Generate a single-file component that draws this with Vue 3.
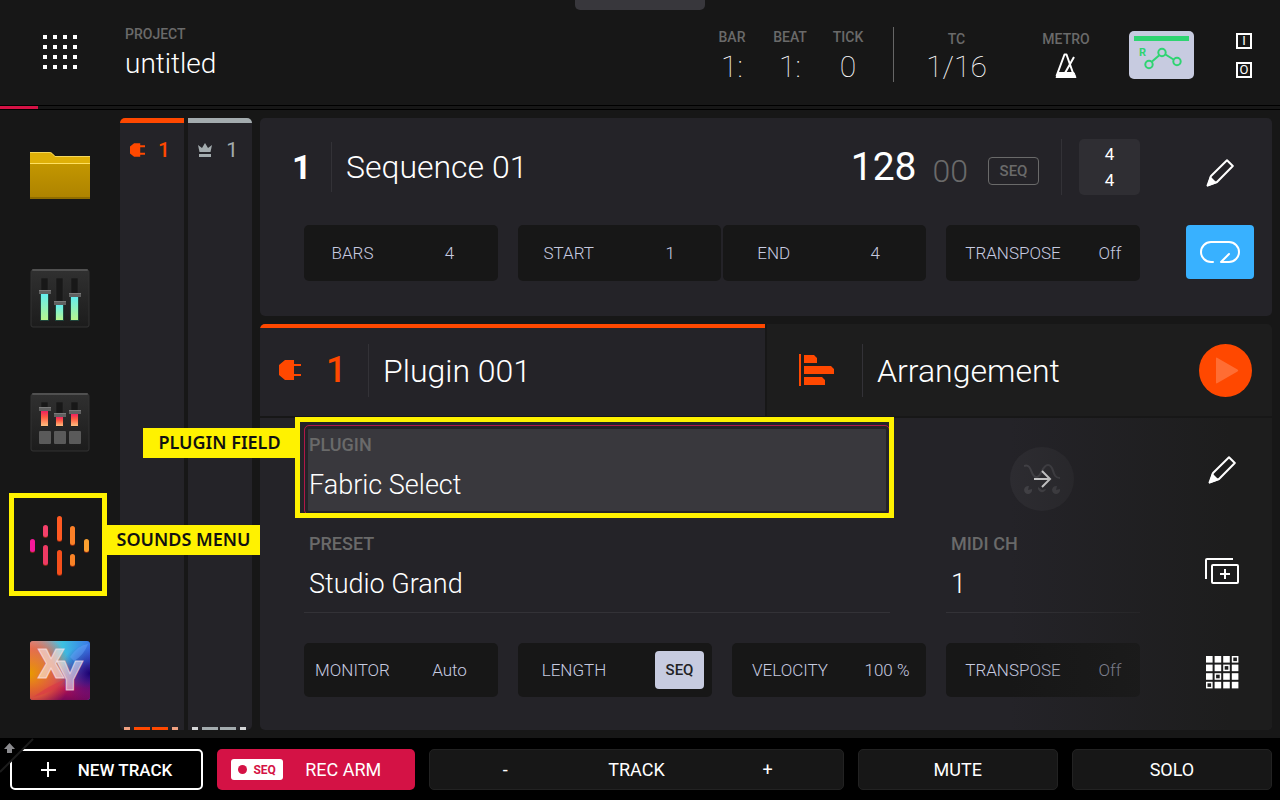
<script setup>
import { ref } from 'vue';

const activeTab = ref('plugin');
const looping = ref(true);

const counters = [
    { label: 'BAR', value: '1:' },
    { label: 'BEAT', value: '1:' },
    { label: 'TICK', value: '0' },
];

const tracks = [
    { kind: 'plugin', number: 1 },
    { kind: 'master', number: 1 },
];

// fader tops and levels inside the 60x60 mixer icons
const channelFaders = [
    { x: 11, top: 21 },
    { x: 26, top: 32 },
    { x: 41, top: 24 },
];
const padFaders = [
    { x: 11, top: 14 },
    { x: 26, top: 20 },
    { x: 41, top: 17 },
];

// one bar of the sounds icon: x, y, height, colour
const soundBars = [
    [0, 23, 13, '#f5189a'],
    [13, 9, 12, '#f5406a'],
    [13, 29, 20, '#ee3a63'],
    [27, 0, 25, '#ff5a22'],
    [27, 34, 25, '#f5501c'],
    [40, 10, 19, '#fb8028'],
    [40, 38, 12, '#f98226'],
    [54, 23, 13, '#fb9f30'],
];

const padCells = [];
for (let row = 0; row < 4; row++) {
    for (let col = 0; col < 4; col++) {
        padCells.push({ x: col * 8.6, y: row * 8.6, hollow: row + col === 3 });
    }
}
</script>

<template>
    <div class="screen">
        <header class="top">
            <span class="notch"></span>
            <button class="menu-dots" aria-label="Menu">
                <svg width="34" height="34" viewBox="0 0 34 34" fill="#fff">
                    <template v-for="r in 4" :key="r">
                        <rect v-for="c in 4" :key="c" :x="(c - 1) * 10" :y="(r - 1) * 10" width="4" height="4" />
                    </template>
                </svg>
            </button>
            <div class="project">
                <span class="caption">PROJECT</span>
                <span class="project-name">untitled</span>
            </div>
            <div class="counters">
                <div v-for="c in counters" :key="c.label" class="counter">
                    <span class="caption">{{ c.label }}</span>
                    <span class="thin-value">{{ c.value }}</span>
                </div>
            </div>
            <div class="counter tc">
                <span class="caption">TC</span>
                <span class="thin-value">1/16</span>
            </div>
            <button class="counter metro">
                <span class="caption">METRO</span>
                <svg width="24" height="26" viewBox="0 0 24 26" fill="none" stroke="#fff" stroke-width="2" stroke-linejoin="round">
                    <path d="M2.500 23 L10.500 1.500 H12.500 L19 20 M11 20 L20 4" />
                    <path d="M2 24.500 L4 19.500 H20 L22 24.500 Z" fill="#fff" stroke-width="1" />
                </svg>
            </button>
            <button class="automation" aria-label="Automation read">
                <svg width="65" height="48" viewBox="0 0 65 48">
                    <rect x="5" y="5" width="55" height="5" fill="#2fd472" />
                    <text x="10" y="25" class="auto-letter">R</text>
                    <g fill="none" stroke="#2fd472" stroke-width="2">
                        <path d="M23 30.500 L30 24.500 M36.500 23.500 L44.500 28.500" />
                        <circle cx="20" cy="33.500" r="3.700" />
                        <circle cx="33" cy="21.500" r="3.700" />
                        <circle cx="48" cy="30.500" r="3.700" />
                    </g>
                </svg>
            </button>
            <div class="io">
                <span>I</span>
                <span>O</span>
            </div>
        </header>
        <div class="progress"><span></span></div>

        <div class="main">
            <nav class="rail">
                <button class="rail-item" aria-label="Browser">
                    <svg width="60" height="60" viewBox="0 0 60 60">
                        <defs>
                            <linearGradient id="folder" x1="0" y1="0" x2="0" y2="1">
                                <stop offset="0" stop-color="#c39700" />
                                <stop offset="1" stop-color="#ad8200" />
                            </linearGradient>
                        </defs>
                        <path d="M0 7 H19 Q21 7 22 8 L25 11 H60 V20 H0 Z" fill="#dfb008" />
                        <path d="M0 7.500 H19 Q21 7.500 22 8.500 L25 11.500 H60" fill="none" stroke="#f4d75c" />
                        <rect y="18" width="60" height="36" fill="url(#folder)" />
                        <rect y="18" width="60" height="1" fill="#ffe060" />
                        <rect y="52" width="60" height="2" fill="#8f6c00" />
                    </svg>
                </button>
                <button class="rail-item" aria-label="Channel mixer">
                    <svg width="60" height="60" viewBox="0 0 60 60">
                        <defs>
                            <linearGradient id="tile" x1="0" y1="0" x2="0" y2="1">
                                <stop offset="0" stop-color="#303030" />
                                <stop offset="1" stop-color="#1c1c1c" />
                            </linearGradient>
                            <linearGradient id="mint" x1="0" y1="0" x2="0" y2="1">
                                <stop offset="0" stop-color="#64eef0" />
                                <stop offset="1" stop-color="#b8f58c" />
                            </linearGradient>
                        </defs>
                        <rect x="1" y="1" width="58" height="57" rx="2" fill="url(#tile)" stroke="#333" />
                        <rect x="2" y="0" width="56" height="2" rx="1" fill="#505050" />
                        <g v-for="f in channelFaders" :key="f.x">
                            <rect :x="f.x" y="9" width="7" height="42" fill="#181818" stroke="#333" stroke-width="0.500" />
                            <rect :x="f.x - 1" :y="f.top + 4" width="9" :height="48 - f.top" fill="#1c5c4c" opacity="0.600" />
                            <rect :x="f.x" :y="f.top + 4" width="7" :height="47 - f.top" fill="url(#mint)" />
                            <rect :x="f.x - 2" :y="f.top" width="12" height="4" fill="#606060" />
                            <rect :x="f.x - 2" :y="f.top" width="12" height="1" fill="#7a7a7a" />
                        </g>
                    </svg>
                </button>
                <button class="rail-item" aria-label="Pad mixer">
                    <svg width="60" height="60" viewBox="0 -1 60 60">
                        <defs>
                            <linearGradient id="ember" x1="0" y1="0" x2="0" y2="1">
                                <stop offset="0" stop-color="#f02060" />
                                <stop offset="0.400" stop-color="#ff5a40" />
                                <stop offset="1" stop-color="#ffc080" />
                            </linearGradient>
                        </defs>
                        <rect x="1" y="1" width="58" height="57" rx="2" fill="url(#tile)" stroke="#333" />
                        <rect x="2" y="0" width="56" height="2" rx="1" fill="#505050" />
                        <g v-for="f in padFaders" :key="f.x">
                            <rect :x="f.x" y="9" width="7" height="25" fill="#181818" stroke="#333" stroke-width="0.500" />
                            <rect :x="f.x" :y="f.top + 4" width="7" :height="29 - f.top" fill="url(#ember)" />
                            <rect :x="f.x - 2" :y="f.top" width="12" height="4" fill="#606060" />
                            <rect :x="f.x - 2" :y="f.top" width="12" height="1" fill="#7a7a7a" />
                            <rect :x="f.x - 2" y="38" width="12" height="13" rx="1" fill="#5a5a5a" />
                        </g>
                    </svg>
                </button>
                <button class="rail-item" aria-label="Sounds">
                    <svg width="60" height="60" viewBox="0 0 60 60">
                        <g v-for="(b, i) in soundBars" :key="i">
                            <rect :x="b[0]" :y="b[1] + 1" width="5" :height="b[2]" rx="2.500" fill="#8a2810" />
                            <rect :x="b[0]" :y="b[1]" width="5" :height="b[2]" rx="2.500" :fill="b[3]" />
                        </g>
                    </svg>
                    <span class="mark mark-sounds"></span>
                    <span class="tag tag-sounds">SOUNDS MENU</span>
                </button>
                <button class="rail-item" aria-label="XYFX">
                    <svg width="60" height="60" viewBox="0 -1 60 60">
                        <defs>
                            <linearGradient id="xyTop" x1="0" y1="0" x2="1" y2="0">
                                <stop offset="0" stop-color="#dda0a4" />
                                <stop offset="0.550" stop-color="#3cc0e0" />
                                <stop offset="1" stop-color="#3a78e8" />
                            </linearGradient>
                            <radialGradient id="xyLeft" cx="0" cy="0.550" r="0.700">
                                <stop offset="0" stop-color="#e89a00" />
                                <stop offset="0.600" stop-color="#ea6038" stop-opacity="0.800" />
                                <stop offset="1" stop-color="#e85030" stop-opacity="0" />
                            </radialGradient>
                            <radialGradient id="xyRight" cx="1" cy="0.550" r="0.500">
                                <stop offset="0" stop-color="#180070" />
                                <stop offset="1" stop-color="#3010a0" stop-opacity="0" />
                            </radialGradient>
                            <linearGradient id="xyBottom" x1="0" y1="0" x2="0" y2="1">
                                <stop offset="0.350" stop-color="#d02860" stop-opacity="0" />
                                <stop offset="0.800" stop-color="#b01058" />
                                <stop offset="1" stop-color="#780858" />
                            </linearGradient>
                        </defs>
                        <rect width="60" height="59" rx="3" fill="url(#xyTop)" />
                        <rect width="60" height="59" rx="3" fill="url(#xyBottom)" />
                        <rect width="60" height="59" rx="3" fill="url(#xyLeft)" />
                        <rect width="60" height="59" rx="3" fill="url(#xyRight)" />
                        <path d="M3 56 Q24 52 36 38 Q20 44 3 56 Z" fill="#d83848" opacity="0.600" />
                        <path d="M40 16 Q48 4 58 3 Q54 14 44 20 Z" fill="#6fa8ff" opacity="0.400" />
                        <text x="8" y="37" class="xy-letter">X</text>
                        <text x="27" y="49" class="xy-letter">Y</text>
                    </svg>
                </button>
            </nav>

            <div class="tracks">
                <button v-for="t in tracks" :key="t.kind" class="track" :class="t.kind">
                    <span class="track-head">
                        <svg v-if="t.kind === 'plugin'" width="15" height="14" viewBox="0 0 22 20" fill="currentColor">
                            <path d="M0 5 L6 0 H15 V3 H22 V6 H15 V14 H22 V17 H15 V20 H6 L0 15 Z" />
                        </svg>
                        <svg v-else width="14" height="14" viewBox="0 0 14 14" fill="currentColor">
                            <path d="M0 2 L4 5 L7 0 L10 5 L14 2 L12.500 9 H1.500 Z M1 11 H13 V14 H1 Z" />
                        </svg>
                        <span>{{ t.number }}</span>
                    </span>
                    <span class="meters"><i class="edge"></i><i></i><i></i><i class="edge"></i></span>
                </button>
            </div>

            <div class="panels">
                <section class="panel sequence">
                    <div class="panel-main">
                        <div class="seq-head">
                            <span class="seq-number">1</span>
                            <h1 class="seq-name">Sequence 01</h1>
                            <div class="tempo">
                                <span class="bpm">128</span>
                                <span class="bpm-fraction">00</span>
                                <button class="seq-mode">SEQ</button>
                            </div>
                            <button class="time-signature"><span>4</span><span>4</span></button>
                        </div>
                        <div class="cells">
                            <button class="cell"><span>BARS</span><span>4</span></button>
                            <div class="range">
                                <button class="cell"><span>START</span><span>1</span></button>
                                <button class="cell"><span>END</span><span>4</span></button>
                            </div>
                            <button class="cell wide"><span>TRANSPOSE</span><span>Off</span></button>
                        </div>
                    </div>
                    <div class="side">
                        <button class="icon-button" aria-label="Edit sequence">
                            <svg width="28" height="28" viewBox="0 0 28 28">
                                <path d="M21 1.200 L26.800 7 L11 23 L1.500 26.500 L5 17 Z" fill="none" stroke="#fff" stroke-width="2" stroke-linejoin="round" />
                                <path d="M4 17 L11 24 L1 27.500 Z" fill="#fff" />
                            </svg>
                        </button>
                        <button class="loop" :class="{ off: !looping }" aria-label="Loop" @click="looping = !looping">
                            <svg width="40" height="22" viewBox="0 0 40 22" fill="none" stroke="#fff" stroke-width="2" stroke-linecap="round" stroke-linejoin="round">
                                <path d="M13 21 H11 A10 10 0 0 1 11 1 H29 A10 10 0 0 1 29 21 H21 L29 13" />
                            </svg>
                        </button>
                    </div>
                </section>

                <section class="panel track-panel">
                    <div class="tabs">
                        <button class="tab" :class="{ active: activeTab === 'plugin' }" @click="activeTab = 'plugin'">
                            <svg class="plug" width="22" height="20" viewBox="0 0 22 20" fill="#ff4800">
                                <path d="M0 5 L6 0 H15 V4 H22 V6 H15 V14 H22 V16 H15 V20 H6 L0 15 Z" />
                            </svg>
                            <span class="tab-number">1</span>
                            <span class="tab-name">Plugin 001</span>
                        </button>
                        <div class="tab" :class="{ active: activeTab === 'arrangement' }">
                            <button class="tab-link" @click="activeTab = 'arrangement'">
                                <svg width="35" height="32" viewBox="0 0 35 32" fill="#ff4800">
                                    <path d="M0 0 H2 V32 H0 Z M5 1 H15 L18 4 V9 H5 Z M5 12 H32 L35 15 V20 H5 Z M5 23 H23 L26 26 V31 H5 Z" />
                                </svg>
                                <span class="tab-name">Arrangement</span>
                            </button>
                            <button class="play" aria-label="Play">
                                <svg width="53" height="53" viewBox="0 0 53 53">
                                    <circle cx="26.500" cy="26.500" r="26.500" fill="#ff4800" />
                                    <path d="M17 14.500 Q17 13 18.500 14 L38.500 25.500 Q40 26.500 38.500 27.500 L18.500 39 Q17 40 17 38.500 Z" fill="#ff6d33" />
                                </svg>
                            </button>
                        </div>
                    </div>

                    <div class="body">
                        <div class="panel-main">
                            <div class="fields">
                                <div class="slot">
                                    <button class="field focused">
                                        <span class="field-label">PLUGIN</span>
                                        <span class="field-value">Fabric Select</span>
                                    </button>
                                    <span class="mark mark-plugin"></span>
                                    <span class="tag tag-plugin">PLUGIN FIELD</span>
                                </div>
                                <button class="plugin-open" aria-label="Open plugin">
                                    <svg width="36" height="30" viewBox="0 0 36 30" fill="none">
                                        <path d="M0 2 C9 -1 6 14 13 13 C18 12 18 1 24 1 C31 1 27 14 36 14" stroke="#444348" stroke-width="2" />
                                        <g fill="#444348">
                                            <path d="M4 26 L5 22 A4 4 0 1 0 8 25 Z" />
                                            <path d="M18 26 L14 23 A4 4 0 1 0 22 25 Z" />
                                            <path d="M32 26 L33 22 A4 4 0 1 0 36 25 Z" />
                                        </g>
                                        <path d="M10 15 H26 M18 7 L26 15 L18 23" stroke="#dededf" stroke-width="2" />
                                    </svg>
                                </button>
                                <button class="field underlined preset">
                                    <span class="field-label">PRESET</span>
                                    <span class="field-value">Studio Grand</span>
                                </button>
                                <button class="field underlined">
                                    <span class="field-label">MIDI CH</span>
                                    <span class="field-value">1</span>
                                </button>
                            </div>
                            <div class="cells four">
                                <button class="cell"><span>MONITOR</span><span>Auto</span></button>
                                <button class="cell length"><span>LENGTH</span><span class="chip">SEQ</span></button>
                                <button class="cell velocity"><span>VELOCITY</span><span>100 %</span></button>
                                <button class="cell wide"><span>TRANSPOSE</span><span>Off</span></button>
                            </div>
                        </div>
                        <div class="side">
                            <button class="icon-button" aria-label="Edit track">
                                <svg width="28" height="28" viewBox="0 0 28 28">
                                    <path d="M21 1.200 L26.800 7 L11 23 L1.500 26.500 L5 17 Z" fill="none" stroke="#fff" stroke-width="2" stroke-linejoin="round" />
                                    <path d="M4 17 L11 24 L1 27.500 Z" fill="#fff" />
                                </svg>
                            </button>
                            <button class="icon-button" aria-label="Duplicate track">
                                <svg width="34" height="26" viewBox="0 0 34 26" fill="none" stroke="#fff" stroke-width="2">
                                    <path d="M1 21 V2 Q1 1 2 1 H28 M20 11 V21 M15 16 H25" />
                                    <rect x="7" y="7" width="26" height="18" rx="1" />
                                </svg>
                            </button>
                            <button class="icon-button" aria-label="Pads">
                                <svg width="33" height="33" viewBox="0 0 33 33" fill="#fff">
                                    <g v-for="(p, i) in padCells" :key="i">
                                        <rect :x="p.x" :y="p.y" width="6.600" height="6.600" />
                                        <rect v-if="p.hollow" :x="p.x + 1.500" :y="p.y + 1.500" width="3.600" height="3.600" fill="#1d1d1d" />
                                    </g>
                                </svg>
                            </button>
                        </div>
                    </div>
                </section>
            </div>
        </div>

        <footer class="bottom">
            <button class="key new-track"><span class="plus"></span>NEW TRACK</button>
            <button class="key rec-arm"><span class="rec-chip"><i></i>SEQ</span>REC ARM</button>
            <div class="key stepper">
                <button aria-label="Previous track">-</button>
                <span>TRACK</span>
                <button aria-label="Next track">+</button>
            </div>
            <button class="key">MUTE</button>
            <button class="key">SOLO</button>
            <svg class="corner" width="36" height="36" viewBox="0 0 36 36">
                <path d="M0 0 H34 L0 34 Z" fill="#000" />
                <path d="M33 1 L0 34" stroke="#1c1c1c" stroke-width="2" />
                <path d="M9.500 5 L15 11 H12 V15 H7 V11 H4 Z" fill="#8a8a8e" />
            </svg>
        </footer>
    </div>
</template>

<style>
body {
    margin: 0;
    background: #171717;
}
</style>

<style scoped>
.screen {
    display: flex;
    flex-direction: column;
    min-height: 100vh;
    background: #171717;
    color: #fff;
    font-family: Roboto, "Liberation Sans", sans-serif;
    font-weight: 300;
}

.screen * {
    box-sizing: border-box;
}

button {
    display: flex;
    align-items: center;
    justify-content: center;
    margin: 0;
    padding: 0;
    border: 0;
    background: none;
    color: inherit;
    font: inherit;
    cursor: pointer;
}

svg {
    display: block;
    flex: none;
}

/* ===== header ===== */
.top {
    position: relative;
    display: flex;
    align-items: flex-start;
    height: 105px;
    padding: 0 28px 0 43px;
}

.notch {
    position: absolute;
    top: 0;
    left: 50%;
    width: 130px;
    height: 10px;
    margin-left: -65px;
    border-radius: 0 0 5px 5px;
    background: #38373c;
}

.menu-dots {
    margin-top: 35px;
}

.caption {
    color: #6a6a6a;
    font-size: 14px;
    font-weight: 500;
    line-height: 16px;
}

.project {
    display: flex;
    flex-direction: column;
    gap: 6px;
    flex: 1;
    margin-left: 48px;
    padding-top: 26px;
}

.project-name {
    font-size: 28px;
    line-height: 32px;
}

.counters {
    display: flex;
    margin-right: 16px;
}

.counter {
    display: flex;
    flex-direction: column;
    align-items: center;
    justify-content: flex-start;
    gap: 6px;
    width: 58px;
    padding-top: 29px;
}

.thin-value {
    font-size: 30px;
    font-weight: 100;
    line-height: 32px;
}

.tc {
    position: relative;
    gap: 4px;
    width: 127px;
    padding-top: 31px;
}

.tc::before {
    content: "";
    position: absolute;
    top: 27px;
    left: 0;
    width: 1px;
    height: 55px;
    background: #666;
}

.metro {
    width: 92px;
    padding-top: 31px;
}

.automation {
    margin: 31px 42px 0 17px;
    border-radius: 5px;
    background: #c7cbe0;
}

.auto-letter {
    fill: #2fd472;
    font-size: 11px;
    font-weight: 700;
}

.io {
    display: flex;
    flex-direction: column;
    gap: 13px;
    padding-top: 33px;
}

.io span {
    width: 16px;
    height: 16px;
    border: 2px solid #fff;
    font-size: 13px;
    font-weight: 400;
    line-height: 12px;
    text-align: center;
}

.progress {
    height: 5px;
    border-top: 1px solid #000;
    border-bottom: 1px solid #000;
}

.progress span {
    display: block;
    width: 3%;
    height: 3px;
    background: #d41245;
}

/* ===== rail and tracks ===== */
.main {
    display: flex;
    flex: 1;
    padding-right: 8px;
}

.rail {
    display: flex;
    flex-direction: column;
    justify-content: space-around;
    align-items: center;
    width: 120px;
    padding: 3px 0 6px;
}

.rail-item {
    position: relative;
    width: 60px;
    height: 60px;
}

.xy-letter {
    fill: #fff;
    fill-opacity: 0.55;
    stroke: #ffe8ee;
    stroke-opacity: 0.7;
    font-size: 41px;
    font-weight: 900;
}

.tracks {
    display: flex;
    gap: 4px;
    padding: 8px 8px 8px 0;
}

.track {
    flex-direction: column;
    justify-content: space-between;
    width: 64px;
    border-top: 5px solid currentColor;
    background: #242328;
    color: #a3abae;
}

.track.plugin {
    border-radius: 5px 0 0 5px;
    color: #ff4800;
}

.track.master {
    border-radius: 0 5px 5px 0;
}

.track-head {
    display: flex;
    align-items: center;
    align-self: flex-start;
    justify-content: space-between;
    width: 40px;
    margin: 15px 0 0 10px;
    font-size: 21px;
    font-weight: 500;
    line-height: 24px;
}

.track.master .track-head {
    font-weight: 400;
}

.meters {
    display: flex;
    align-self: flex-start;
    gap: 2px;
    margin-left: 4px;
}

.meters i {
    width: 16px;
    height: 3px;
    background: currentColor;
}

.meters .edge {
    width: 6px;
    margin-right: 2px;
    background: #f0a080;
}

.meters .edge:last-child {
    margin: 0 0 0 2px;
}

.master .edge {
    background: #d4d6d8;
}

/* ===== panels ===== */
.panels {
    display: flex;
    flex: 1;
    flex-direction: column;
    gap: 8px;
    padding: 8px 0;
}

.panel {
    border-radius: 5px;
    background: #242328;
}

.sequence {
    display: flex;
    padding: 21px 0 35px;
}

.panel-main {
    flex: 1;
    padding: 0 28px 0 44px;
}

.side {
    display: flex;
    flex-direction: column;
    align-items: center;
    width: 104px;
}

.seq-head {
    display: flex;
    align-items: center;
    height: 56px;
    margin: 0 0 30px -44px;
}

.seq-number {
    width: 72px;
    padding-left: 32px;
    border-right: 1px solid #333237;
    font-size: 34px;
    font-weight: 700;
    line-height: 50px;
}

.seq-name {
    flex: 1;
    margin: 0;
    padding-left: 14px;
    font-size: 32px;
    font-weight: 300;
    line-height: 40px;
}

.tempo {
    display: flex;
    align-items: center;
    margin-right: 17px;
    padding-right: 22px;
    border-right: 1px solid #333237;
}

.bpm {
    font-size: 39px;
    font-weight: 400;
    line-height: 56px;
}

.bpm-fraction {
    margin: 8px 20px 0 16px;
    color: #6a6a6a;
    font-size: 32px;
    line-height: 40px;
}

.seq-mode {
    width: 51px;
    height: 28px;
    margin-top: 8px;
    border: 1px solid #6a6a6a;
    border-radius: 4px;
    color: #6a6a6a;
    font-size: 15px;
    font-weight: 500;
    line-height: 16px;
}

.time-signature {
    flex-direction: column;
    gap: 8px;
    width: 61px;
    height: 56px;
    border-radius: 5px;
    background: #2f2e33;
    font-size: 17px;
    font-weight: 400;
    line-height: 18px;
}

.cells {
    display: grid;
    grid-template-columns: 194fr 408fr 194fr;
    gap: 20px;
}

.cells.four {
    grid-template-columns: repeat(4, 1fr);
}

.range {
    display: grid;
    grid-template-columns: 1fr 1fr;
    gap: 2px;
}

.cell {
    display: grid;
    grid-template-columns: 1fr 1fr;
    justify-items: center;
    height: 56px;
    border-radius: 5px;
    background: #171717;
    color: #c7cbe0;
    font-size: 17px;
    line-height: 22px;
    white-space: nowrap;
}

.four .cell {
    height: 54px;
}

.cell.wide {
    grid-template-columns: 134fr 60fr;
}

.cell.velocity {
    grid-template-columns: 116fr 78fr;
}

.cell.length {
    grid-template-columns: 112fr 82fr;
}

.chip {
    justify-self: end;
    width: 49px;
    height: 38px;
    margin-right: 8px;
    border-radius: 4px;
    background: #c7cbe0;
    color: #222226;
    font-size: 15px;
    font-weight: 500;
    line-height: 38px;
}

.icon-button {
    width: 54px;
    height: 54px;
}

.sequence .side {
    gap: 25px;
    padding-top: 7px;
}

.loop {
    width: 68px;
    height: 54px;
    border-radius: 4px;
    background: #38b1ff;
}

.loop.off {
    background: #171717;
}

/* ===== track panel ===== */
.track-panel {
    flex: 1;
    display: flex;
    flex-direction: column;
}

.tabs {
    display: grid;
    grid-template-columns: 1fr 1fr;
    gap: 2px;
    border-bottom: 2px solid #171717;
    background: #171717;
}

.tab {
    display: flex;
    align-items: center;
    justify-content: flex-start;
    height: 92px;
    border-radius: 0 5px 0 0;
    background: #1d1d1d;
}

.tab.active {
    border-radius: 5px 0 0 0;
    background: linear-gradient(#ff4800 4px, #242328 4px);
}

.plug {
    margin-left: 19px;
}

.tab-number {
    width: 67px;
    padding-left: 25px;
    color: #ff4800;
    font-size: 36px;
    font-weight: 500;
    text-align: left;
}

.tab-name {
    padding: 2px 0 0 14px;
    border-left: 1px solid #333237;
    font-size: 32px;
    line-height: 51px;
}

.tab-link {
    flex: 1;
    gap: 28px;
    justify-content: flex-start;
    padding-left: 32px;
}

.play {
    margin-right: 20px;
    border-radius: 50%;
}

.body {
    position: relative;
    display: flex;
    flex: 1;
}

/* the right edge fades out under the icon column */
.body::after {
    content: "";
    position: absolute;
    inset: 0;
    border-radius: 0 0 5px 0;
    background: linear-gradient(to right, rgba(29, 29, 29, 0) 74%, #1d1d1d 96%);
    pointer-events: none;
}

.body .panel-main {
    padding-top: 7px;
}

.body .side {
    position: relative;
    z-index: 1;
    gap: 47px;
    padding: 25px 0 0 4px;
}

.fields {
    display: grid;
    grid-template-columns: repeat(4, 1fr);
    column-gap: 20px;
    row-gap: 15px;
    margin-bottom: 30px;
}

.slot,
.preset {
    grid-column: span 3;
    margin-right: 36px;
}

.slot {
    position: relative;
    z-index: 2;
    height: 90px;
}

.field {
    flex-direction: column;
    align-items: flex-start;
    justify-content: flex-start;
    gap: 12px;
    padding: 2px 0 12px 5px;
    text-align: left;
}

.field-label {
    color: #6a6a6a;
    font-size: 18px;
    font-weight: 500;
    line-height: 24px;
}

.field-value {
    font-size: 27px;
    line-height: 32px;
}

.field.focused {
    width: 100%;
    height: 90px;
    padding: 7px 0 0 4px;
    border: 1px solid #b01848;
    border-radius: 5px;
    background: #39383d;
    box-shadow: inset 0 0 0 3px #242328;
}

.field.underlined {
    border-bottom: 1px solid #333237;
}

.plugin-open {
    align-self: center;
    width: 64px;
    height: 64px;
    margin: 18px 0 0 64px;
    border-radius: 50%;
    background: #2d2c31;
}

/* ===== callouts ===== */
.mark,
.tag {
    position: absolute;
    pointer-events: none;
}

.mark {
    border: 5px solid #fff200;
}

.mark-plugin {
    inset: -8px -4px -3px -9px;
}

.mark-sounds {
    inset: -23px -17px -20px -21px;
}

.tag {
    z-index: 3;
    width: 153px;
    height: 30px;
    background: #fff200;
    color: #111;
    font-family: "Noto Sans", "Open Sans", sans-serif;
    font-size: 18px;
    font-weight: 600;
    line-height: 29px;
    text-align: center;
    white-space: nowrap;
}

.tag-plugin {
    top: 3px;
    right: 100%;
    margin-right: 8px;
}

.tag-sounds {
    top: 9px;
    left: 100%;
    margin-left: 17px;
}

/* ===== footer ===== */
.bottom {
    position: relative;
    display: flex;
    gap: 14px;
    padding: 11px 8px 10px 10px;
    background: #000;
}

.key {
    flex: 200 1 200px;
    height: 41px;
    border: 1px solid #222;
    border-radius: 5px;
    background: #171717;
    font-size: 18px;
    font-weight: 400;
}

.new-track {
    flex: 193 1 193px;
    gap: 22px;
    border: 2px solid #fff;
    background: #000;
    font-size: 17px;
    font-weight: 500;
}

.plus {
    width: 15px;
    height: 15px;
    background:
        linear-gradient(#fff, #fff) center / 15px 2px no-repeat,
        linear-gradient(#fff, #fff) center / 2px 15px no-repeat;
}

.rec-arm {
    flex: 198 1 198px;
    gap: 22px;
    justify-content: flex-start;
    padding-left: 14px;
    border: 0;
    background: #d41245;
}

.rec-chip {
    display: flex;
    align-items: center;
    justify-content: center;
    gap: 6px;
    width: 52px;
    height: 21px;
    border-radius: 3px;
    background: #fff;
    color: #d41245;
    font-size: 12px;
    font-weight: 700;
}

.rec-chip i {
    width: 9px;
    height: 9px;
    border-radius: 50%;
    background: #d41245;
}

.stepper {
    flex: 414 1 414px;
    display: grid;
    grid-template-columns: 4fr 3fr 4fr;
    align-items: center;
    text-align: center;
}

.stepper button {
    height: 100%;
}

.corner {
    position: absolute;
    top: 0;
    left: 0;
}
</style>
